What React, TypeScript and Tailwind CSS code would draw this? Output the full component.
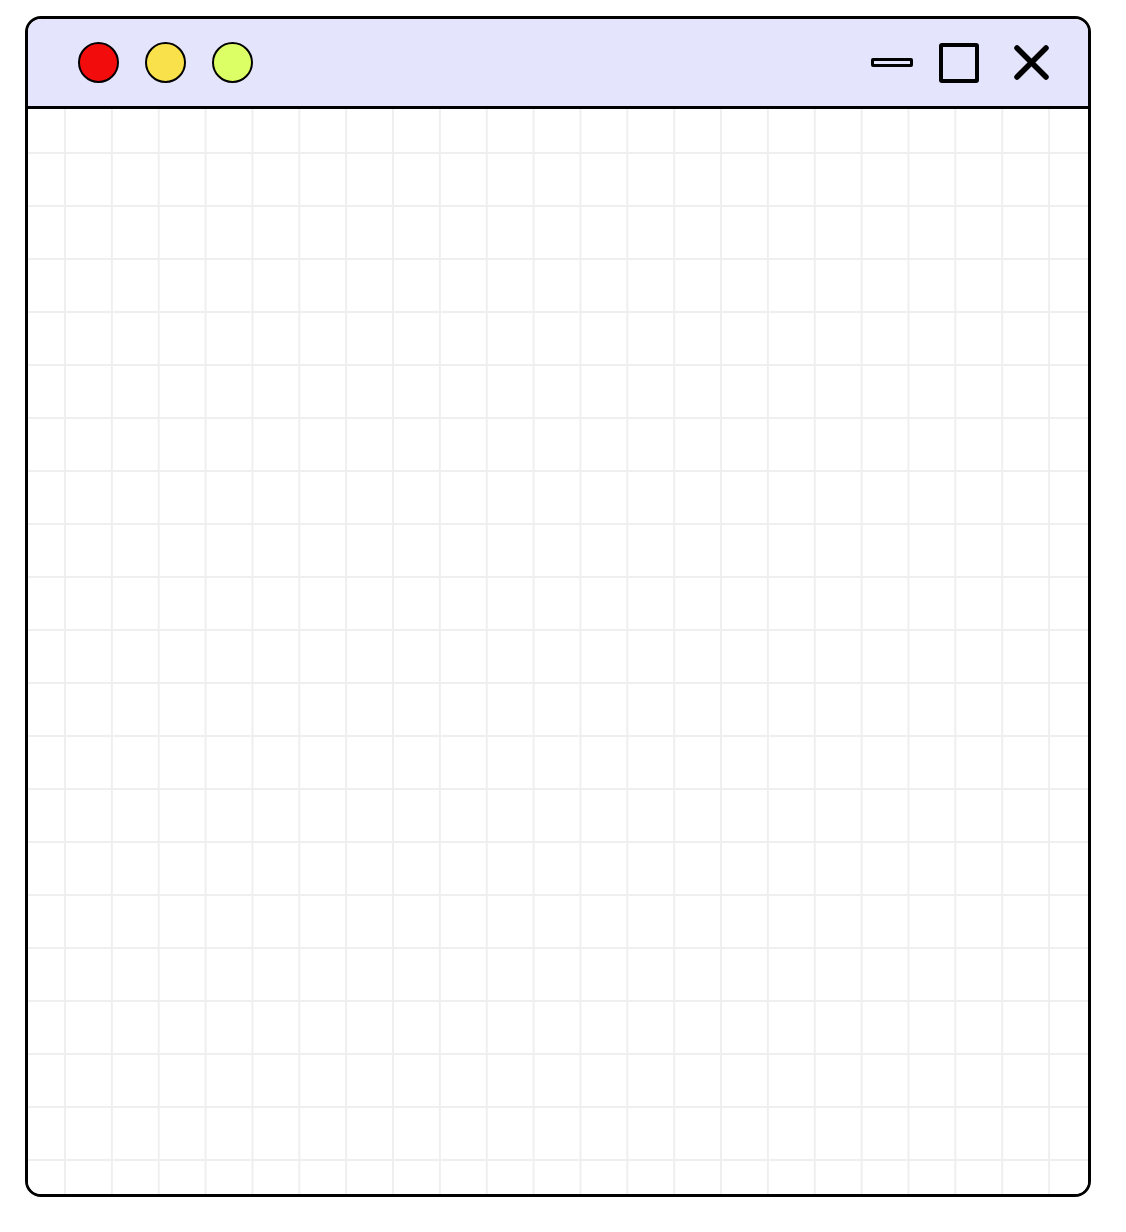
import React from 'react';

const App: React.FC = () => {
  return (
    <div className="min-h-[1232px] w-[1126px] bg-white pt-[16px] pl-[25px]">
      {/* Window */}
      <div className="flex h-[1181px] w-[1066px] flex-col overflow-hidden rounded-[16px] border-[3px] border-black bg-white">
        {/* Title bar */}
        <div className="flex h-[90px] shrink-0 items-center justify-between border-b-[3px] border-black bg-[#e4e4fc] pl-[50px] pr-[38px]">
          <div className="flex items-center gap-[26px]">
            <span className="h-[41px] w-[41px] rounded-full border-2 border-black bg-[#f20c0c]" />
            <span className="h-[41px] w-[41px] rounded-full border-2 border-black bg-[#f8e14a]" />
            <span className="h-[41px] w-[41px] rounded-full border-2 border-black bg-[#ddff66]" />
          </div>
          <div className="flex items-center">
            <span className="h-[9px] w-[42px] rounded-[2px] border-[3px] border-black bg-[#e4e4fc]" />
            <span className="ml-[26px] h-[40px] w-[40px] rounded-[3px] border-4 border-black" />
            <svg className="ml-[34px]" width="37" height="37" viewBox="0 0 37 37">
              <path d="M4 4 L33 33 M33 4 L4 33" stroke="#000" strokeWidth="5.5" strokeLinecap="round" fill="none" />
            </svg>
          </div>
        </div>

        {/* Canvas */}
        <div className="flex-1 bg-white bg-[linear-gradient(to_right,#efefef_2px,transparent_2px),linear-gradient(to_bottom,#efefef_2px,transparent_2px)] bg-[size:46.86px_53px] bg-[position:36px_43px]" />
      </div>
    </div>
  );
};

export default App;
